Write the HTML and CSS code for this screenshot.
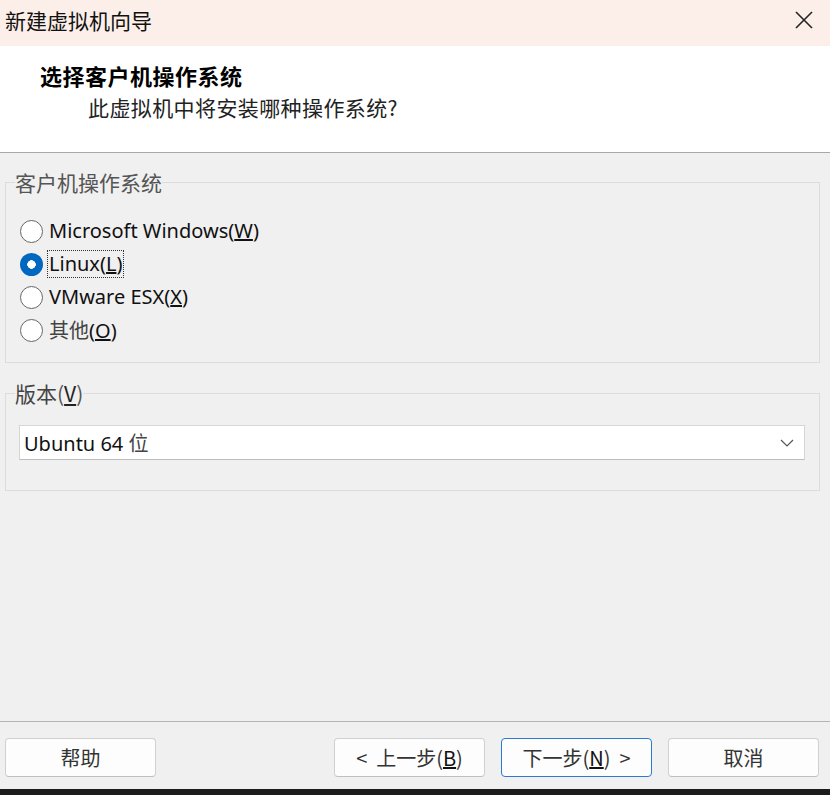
FILE: index.html
```html
<!DOCTYPE html>
<html lang="zh-CN">
<head>
<meta charset="utf-8">
<title>新建虚拟机向导</title>
<link rel="stylesheet" href="styles.css">
</head>
<body>
<div class="window">
  <div class="titlebar">
    <span class="title">新建虚拟机向导</span>
    <svg class="close" width="20" height="20" viewBox="0 0 20 20"><path d="M2 2 L18 18 M18 2 L2 18" stroke="#222" stroke-width="1.6" fill="none"/></svg>
  </div>
  <div class="header">
    <div class="h-title">选择客户机操作系统</div>
    <div class="h-sub">此虚拟机中将安装哪种操作系统?</div>
  </div>
  <div class="content">
    <fieldset class="group g1">
      <legend>客户机操作系统</legend>
      <div class="radios">
        <div class="radio"><span class="dot"></span><span class="lbl">Microsoft Windows(<u>W</u>)</span></div>
        <div class="radio"><span class="dot on"></span><span class="lbl focus">Linux(<u>L</u>)</span></div>
        <div class="radio"><span class="dot"></span><span class="lbl">VMware ESX(<u>X</u>)</span></div>
        <div class="radio"><span class="dot"></span><span class="lbl"><span class="cjk">其他</span>(<u>O</u>)</span></div>
      </div>
    </fieldset>
    <fieldset class="group g2">
      <legend><span class="cjk">版本</span>(<u>V</u>)</legend>
      <div class="select">
        <span>Ubuntu 64 <span class="cjk">位</span></span>
        <svg width="14" height="10" viewBox="0 0 14 10"><path d="M1 2 L7 8 L13 2" stroke="#555" stroke-width="1.2" fill="none"/></svg>
      </div>
    </fieldset>
  </div>
  <div class="footer">
    <button class="btn">帮助</button>
    <div class="spacer"></div>
    <button class="btn">&lt;&nbsp; 上一步(<u>B</u>)</button>
    <button class="btn primary">下一步(<u>N</u>)&nbsp; &gt;</button>
    <button class="btn">取消</button>
  </div>
  <div class="taskbar"></div>
</div>
</body>
</html>
```
FILE: styles.css
```css
* { box-sizing: border-box; }
html, body { margin: 0; padding: 0; }
body {
  width: 830px;
  height: 795px;
  overflow: hidden;
  background: #f0f0f0;
  font-family: "Noto Sans", "Noto Sans CJK SC", sans-serif;
  color: #1a1a1a;
}
.window {
  display: flex;
  flex-direction: column;
  height: 795px;
}
.titlebar {
  height: 46px;
  background: #fcefe9;
  display: flex;
  align-items: center;
  justify-content: space-between;
  padding: 0 16px 0 5px;
}
.title {
  font-family: "Noto Sans CJK SC", sans-serif;
  font-size: 21px;
  color: #111;
  margin-top: -6px;
}
.close { margin-top: -6px; }
.header {
  height: 107px;
  background: #fff;
  border-bottom: 1px solid #a8a8a8;
  padding: 14px 0 0 40px;
  font-family: "Noto Sans CJK SC", serif;
}
.h-title {
  font-size: 22px;
  font-weight: bold;
  line-height: 30px;
  color: #000;
  letter-spacing: 0.5px;
}
.h-sub {
  font-size: 21px;
  line-height: 30px;
  margin-top: 2px;
  padding-left: 48px;
  color: #222;
  letter-spacing: 0.4px;
}
.content {
  flex: 1;
  padding: 16px 10px 0 5px;
  border-bottom: 1px solid #b5b5b5;
}
.group {
  margin: 0;
  padding: 0;
  border: 1px solid #dcdcdc;
  min-width: 0;
}
.group legend {
  padding: 0;
  margin-left: 9px;
  font-size: 21px;
  line-height: 26px;
  color: #555;
  font-family: "Noto Sans CJK SC", sans-serif;
}
.group legend u { color: #222; }
.g1 { height: 194px; }
.radios {
  padding: 23px 0 0 14px;
  display: flex;
  flex-direction: column;
  gap: 7px;
}
.radio {
  display: flex;
  align-items: center;
  height: 26px;
}
.dot {
  width: 23px;
  height: 23px;
  border-radius: 50%;
  border: 1.5px solid #666;
  background: #fff;
  margin-right: 4px;
  flex: none;
}
.dot.on {
  border: none;
  background: radial-gradient(circle, #fff 0 4px, #0067c0 4.5px);
}
.lbl {
  font-size: 20px;
  line-height: 26px;
  color: #111;
  padding: 0 1px;
  border: 1px solid transparent;
}
.lbl.focus { border: 1px dotted #333; }
.cjk { font-family: "Noto Sans CJK SC", sans-serif; color: #444; }
.g2 {
  margin-top: 17px;
  height: 111px;
}
.select {
  margin: 19px 14px 0 13px;
  height: 35px;
  background: #fff;
  border: 1px solid #d6d6d6;
  border-bottom-color: #bdbdbd;
  display: flex;
  align-items: center;
  justify-content: space-between;
  padding: 0 10px 0 4px;
  font-size: 20px;
  color: #111;
}
.footer {
  height: 67px;
  display: flex;
  align-items: flex-start;
  padding: 16px 11px 0 5px;
  gap: 16px;
}
.spacer { flex: 1; }
.btn {
  width: 151px;
  height: 39px;
  background: #fdfdfd;
  border: 1px solid #d0d0d0;
  border-bottom-color: #bfbfbf;
  border-radius: 4px;
  font-family: "Noto Sans CJK SC", sans-serif;
  font-size: 20px;
  color: #333;
  padding: 0;
}
.btn u { color: #111; }
.btn.primary { border: 1px solid #2a7ad4; }
.taskbar {
  height: 6px;
  background: #1c1c1c;
}
```
